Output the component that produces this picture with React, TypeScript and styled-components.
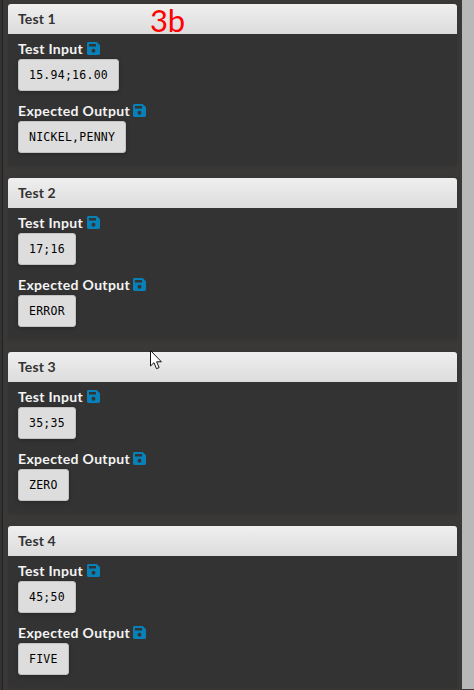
import React from 'react';
import styled, { createGlobalStyle } from 'styled-components';

const GlobalStyle = createGlobalStyle`
  * { box-sizing: border-box; }
  body { margin: 0; background: #3a3836; overflow: hidden; }
`;

const Page = styled.main`
  position: relative;
  display: flex;
  width: 474px;
  height: 690px;
  overflow: hidden;
  background: #3a3937;
  font-family: Lato, sans-serif;
`;

const Edge = styled.div`
  flex: 0 0 3px;
  background: #343333;
  border-right: 1px solid #202020;
`;

const List = styled.div`
  flex: 1;
  display: flex;
  flex-direction: column;
  gap: 13px;
  padding: 4px 5px 0;
`;

const Track = styled.div`
  flex: 0 0 12px;
  height: 689px;
  background: #b8b8b8;
`;

const Card = styled.section`
  flex: 0 0 161px;
  border-radius: 3px;
  background: #333;
  box-shadow: 0 1px 4px rgba(0, 0, 0, 0.12);
`;

const CardHeader = styled.h2`
  margin: 0;
  height: 30px;
  padding: 0 10px;
  border-radius: 3px 3px 0 0;
  background: linear-gradient(#efefef, #dcdcdc);
  color: #333;
  font-size: 14px;
  font-weight: 700;
  line-height: 30px;
  letter-spacing: 0.1px;
`;

const Field = styled.div`
  height: 62px;
  padding: 5px 10px 0;
`;

const Label = styled.div<{ $spacing: number }>`
  display: flex;
  align-items: center;
  height: 20px;
  padding-bottom: 1px;
  color: #f4f4f4;
  font-size: 14px;
  font-weight: 700;
  line-height: 19px;
  letter-spacing: ${(p) => p.$spacing}px;
  white-space: nowrap;
`;

const LabelText = styled.span<{ $width: number }>`
  width: ${(p) => p.$width}px;
`;

const Value = styled.code`
  display: inline-block;
  height: 32px;
  padding: 0 10px;
  border: 1px solid #c3c3c3;
  border-radius: 3px;
  background: #ddd;
  box-shadow: 0 1px 4px rgba(0, 0, 0, 0.25);
  color: #000;
  font: 11.5px/31px 'DejaVu Sans Mono', monospace;
  letter-spacing: 0.26px;
  vertical-align: top;
`;

const Note = styled.div`
  position: absolute;
  left: 150px;
  top: 0;
  color: #f00;
  font: 31px/40px Lato, sans-serif;
  letter-spacing: -0.2px;
`;

const Pointer = styled.svg`
  position: absolute;
  left: 150px;
  top: 350px;
`;

const SaveIcon = () => (
  <svg width="13" height="13" viewBox="0 0 12 12">
    <path
      fill="#0880b8"
      fillRule="evenodd"
      d="M1.3 0H9l3 3v7.7Q12 12 10.7 12H1.3Q0 12 0 10.7V1.3Q0 0 1.3 0ZM1.8 1.8V4.2H8.3V1.8ZM6 6.3A1.8 1.8 0 1 0 6 9.9A1.8 1.8 0 1 0 6 6.3Z"
    />
  </svg>
);

const tests = [
  { input: '15.94;16.00', output: 'NICKEL,PENNY' },
  { input: '17;16', output: 'ERROR' },
  { input: '35;35', output: 'ZERO' },
  { input: '45;50', output: 'FIVE' },
];

export default function App() {
  return (
    <Page>
      <GlobalStyle />
      <Edge />
      <List>
        {tests.map((test, i) => (
          <Card key={i}>
            <CardHeader>Test {i + 1}</CardHeader>
            <Field>
              <Label $spacing={0.3}>
                <LabelText $width={68.5}>Test Input</LabelText>
                <SaveIcon />
              </Label>
              <Value>{test.input}</Value>
            </Field>
            <Field>
              <Label $spacing={0.34}>
                <LabelText $width={115}>Expected Output</LabelText>
                <SaveIcon />
              </Label>
              <Value>{test.output}</Value>
            </Field>
          </Card>
        ))}
      </List>
      <Track />
      <Note>3b</Note>
      <Pointer width="12" height="20" viewBox="0 0 12 20">
        <path d="M.5.5V16L4 12.7l2.5 6 2.6-1.1-2.5-5.8h4.8Z" fill="#fff" stroke="#111" />
      </Pointer>
    </Page>
  );
}
